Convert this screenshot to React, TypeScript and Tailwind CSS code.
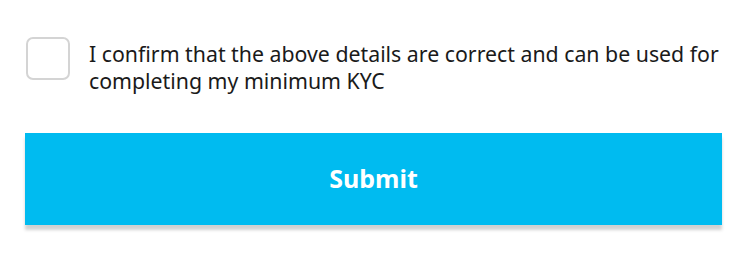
export default function App() {
  return (
    <div className="w-[742px] h-[255px] bg-white" style={{ fontFamily: '"Noto Sans", "Open Sans", sans-serif' }}>
      <div className="flex items-start pt-[37px] pl-[26px] pr-[18px]">
        <div className="w-[44px] h-[43px] shrink-0 rounded-[7px] border-2 border-[#d4d4d4] bg-white" />
        <p className="ml-[19px] text-[21.3px] leading-[27px] text-[#1a1a1a] mt-[3px]">
          I confirm that the above details are correct and can be used for completing my minimum KYC
        </p>
      </div>
      <div className="ml-[25px] mr-[20px] mt-[39px]">
        <button className="w-full h-[92px] bg-[#00bbf0] text-white text-[25px] font-bold shadow-[0_5px_3px_rgba(0,0,0,0.18)]">
          Submit
        </button>
      </div>
    </div>
  );
}
